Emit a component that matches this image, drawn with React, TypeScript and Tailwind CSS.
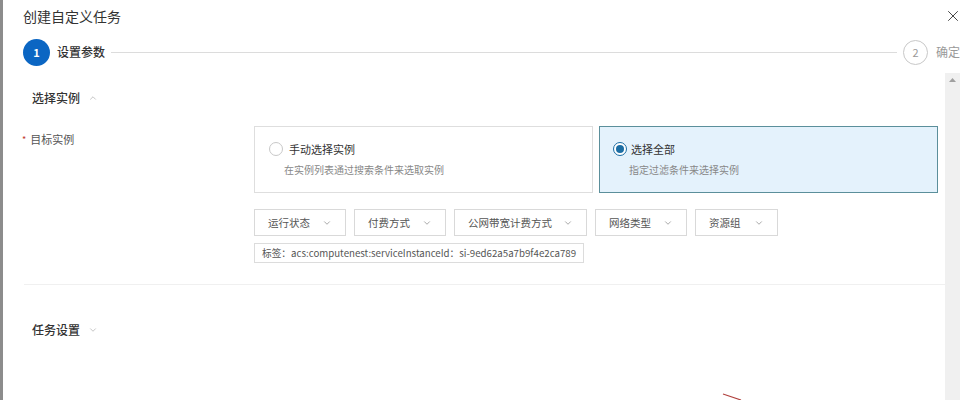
import { X, ChevronDown, ChevronUp } from 'lucide-react';

// 创建自定义任务 — 弹窗第一步

const FONT = { fontFamily: '"Noto Sans CJK SC", "Noto Sans", sans-serif' };

const filters = [
    { label: '运行状态', width: 'w-[92px]' },
    { label: '付费方式', width: 'w-[92px]' },
    { label: '公网带宽计费方式', width: 'w-[133px]' },
    { label: '网络类型', width: 'w-[92px]' },
    { label: '资源组', width: 'w-[83px]' },
];

function Radio({ checked }: { checked: boolean }) {
    return (
        <span
            className={`flex h-[14px] w-[14px] shrink-0 items-center justify-center rounded-full border ${checked ? 'border-[#1c6ea4] bg-white' : 'border-[#c8c8c8] bg-white'}`}
        >
            {checked && <span className="h-[8px] w-[8px] rounded-full bg-[#1c6ea4]" />}
        </span>
    );
}

export default function App() {
    return (
        <div className="flex h-[400px] w-[976px] overflow-hidden bg-white text-[#333]" style={FONT}>
            {/* 背景遮罩露出的边 */}
            <div className="w-[3px] shrink-0 bg-[#8c8c8c]" />

            <div className="relative flex flex-1 flex-col">
                {/* 标题 */}
                <div className="flex h-[33px] items-center pl-[20px] text-[14px] text-[#333]">
                    创建自定义任务
                </div>
                <button className="absolute right-[14px] top-[7px] text-[#444]" aria-label="关闭">
                    <X size={18} strokeWidth={1.3} />
                </button>

                {/* 步骤条 */}
                <div className="flex h-[38px] items-center pl-[20px] pr-[16px]">
                    <span className="flex h-[27px] w-[27px] items-center justify-center rounded-full bg-[#0b66c3] text-[11px] font-bold text-white">
                        1
                    </span>
                    <span className="ml-[7px] text-[12px] font-medium text-[#333]">设置参数</span>
                    <span className="mx-[6px] h-px flex-1 bg-[#dcdcdc]" />
                    <span className="flex h-[25px] w-[25px] items-center justify-center rounded-full border border-[#c8c8c8] text-[11px] text-[#999]">
                        2
                    </span>
                    <span className="ml-[8px] whitespace-nowrap text-[12px] text-[#999]">确定</span>
                </div>

                {/* 内容区 + 滚动条 */}
                <div className="mt-[2px] flex flex-1">
                    <div className="flex w-[942px] shrink-0 flex-col">
                        {/* 选择实例 */}
                        <div className="flex h-[50px] items-center pl-[29px]">
                            <span className="text-[12px] font-medium text-[#333]">选择实例</span>
                            <ChevronUp size={10} className="ml-[8px] text-[#bbb]" />
                        </div>

                        <div className="mt-[3px] flex">
                            <div className="flex w-[251px] shrink-0 items-center self-start pl-[19px] pt-[5px] text-[11px] text-[#555]">
                                <span className="mr-[4px] text-[9px] leading-none text-[#c0392b]">*</span>
                                目标实例
                            </div>
                            <div className="flex flex-col">
                                <div className="flex gap-[6px]">
                                    <div className="flex h-[67px] w-[339px] flex-col border border-[#dedede] bg-white pl-[14px] pt-[14px]">
                                        <div className="flex items-center gap-[6px]">
                                            <Radio checked={false} />
                                            <span className="text-[11px] text-[#333]">手动选择实例</span>
                                        </div>
                                        <span className="mt-[4px] pl-[15px] text-[10px] text-[#888]">在实例列表通过搜索条件来选取实例</span>
                                    </div>
                                    <div className="flex h-[67px] w-[339px] flex-col border border-[#5b8f9b] bg-[#e4f2fc] pl-[13px] pt-[14px]">
                                        <div className="flex items-center gap-[4px]">
                                            <Radio checked />
                                            <span className="text-[11px] text-[#333]">选择全部</span>
                                        </div>
                                        <span className="mt-[4px] pl-[16px] text-[10px] text-[#888]">指定过滤条件来选择实例</span>
                                    </div>
                                </div>

                                {/* 过滤条件 */}
                                <div className="mt-[16px] flex gap-[8px]">
                                    {filters.map(f => (
                                        <button
                                            key={f.label}
                                            className={`flex h-[27px] ${f.width} items-center justify-between border border-[#d9d9d9] bg-white pl-[13px] pr-[13px] text-[10.5px] text-[#555]`}
                                        >
                                            {f.label}
                                            <ChevronDown size={10} className="text-[#999]" />
                                        </button>
                                    ))}
                                </div>

                                <div className="mt-[7px] flex">
                                    <span className="flex h-[20px] items-center border border-[#dcdcdc] px-[7px] text-[9.7px] text-[#555]">
                                        标签：acs:computenest:serviceInstanceId：si-9ed62a5a7b9f4e2ca789
                                    </span>
                                </div>
                            </div>
                        </div>

                        <div className="ml-[21px] mt-[21px] h-px bg-[#f0f0f0]" />

                        {/* 任务设置 */}
                        <div className="flex h-[90px] items-center pl-[29px]">
                            <span className="text-[12px] font-medium text-[#333]">任务设置</span>
                            <ChevronDown size={10} className="ml-[8px] text-[#bbb]" />
                        </div>
                    </div>

                    {/* 滚动条 */}
                    <div className="flex w-[15px] shrink-0 justify-center bg-[#f0f0f0] pt-[5px]">
                        <svg width="7" height="4" viewBox="0 0 7 4">
                            <path d="M0 4 L3.5 0 L7 4 Z" fill="#a0a0a0" />
                        </svg>
                    </div>
                    <div className="flex-1" />
                </div>

                {/* 底部一笔红线 */}
                <svg className="absolute left-[719px] top-[393px]" width="20" height="8" viewBox="0 0 20 8">
                    <path d="M1 1 L19 7" stroke="#b0413e" strokeWidth="1.2" />
                </svg>
            </div>
        </div>
    );
}
